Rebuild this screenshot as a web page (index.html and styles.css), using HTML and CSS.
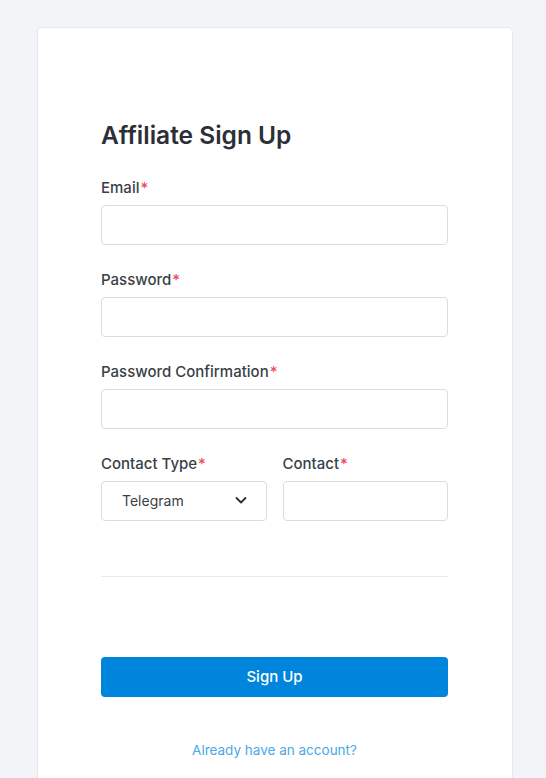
FILE: index.html
```html
<!DOCTYPE html>
<html lang="en">
<head>
    <meta charset="UTF-8">
    <meta name="viewport" content="width=device-width, initial-scale=1.0">
    <title>Affiliate Sign Up</title>
    <link rel="stylesheet" href="styles.css">
</head>
<body>
    <div class="card">
        <h1>Affiliate Sign Up</h1>

        <!-- Account fields -->
        <div class="field">
            <label for="email">Email<span class="req">*</span></label>
            <input type="email" id="email" class="texts">
        </div>
        <div class="field">
            <label for="password">Password<span class="req">*</span></label>
            <input type="password" id="password" class="texts">
        </div>
        <div class="field">
            <label for="passwordConfirm">Password Confirmation<span class="req">*</span></label>
            <input type="password" id="passwordConfirm" class="texts">
        </div>

        <!-- Contact fields -->
        <div class="field-row">
            <div class="field">
                <label for="contactType">Contact Type<span class="req">*</span></label>
                <div class="select-box">
                    <span>Telegram</span>
                    <svg width="14" height="14" viewBox="0 0 14 14" fill="none">
                        <path d="M2.5 5l4.5 4.5 4.5-4.5" stroke="#2b2f36" stroke-width="1.8" stroke-linecap="round" stroke-linejoin="round"/>
                    </svg>
                </div>
            </div>
            <div class="field">
                <label for="contact">Contact<span class="req">*</span></label>
                <input type="text" id="contact" class="texts">
            </div>
        </div>

        <hr class="divider">

        <button id="signUpBtn" type="button">Sign Up</button>

        <a class="login-link" href="#">Already have an account?</a>
    </div>
</body>
</html>
```

FILE: styles.css
```css
body {
    font-family: 'Inter', 'Noto Sans', sans-serif;
    background-color: #f3f4f8;
    margin: 0;
    color: #3a3f47;
}

.card {
    width: 476px;
    box-sizing: border-box;
    margin: 27px 0 0 37px;
    padding: 91px 64px 40px 63px;
    background-color: #fff;
    border: 1px solid #e6e8ec;
    border-bottom: none;
    border-radius: 5px 5px 0 0;
    min-height: 760px;
}

h1 {
    font-size: 24.5px;
    font-weight: 600;
    line-height: 32px;
    margin: 0 0 27px;
    color: #2b2f36;
}

.field {
    display: flex;
    flex-direction: column;
    margin-bottom: 25px;
}

.field label {
    font-size: 15px;
    font-weight: 500;
    line-height: 20px;
    margin-bottom: 7px;
}

.req {
    color: #ec4d5a;
    margin-left: 1px;
}

.texts {
    width: 100%;
    min-width: 0;
    height: 40px;
    box-sizing: border-box;
    border: 1px solid #d9dde3;
    border-radius: 4px;
    padding: 0 12px;
    font: inherit;
}

.field-row {
    display: flex;
    gap: 16px;
}

.field-row .field {
    flex: 1;
    min-width: 0;
    margin-bottom: 0;
}

.select-box {
    height: 40px;
    box-sizing: border-box;
    border: 1px solid #d9dde3;
    border-radius: 4px;
    padding: 0 18px 2px 20px;
    display: flex;
    align-items: center;
    justify-content: space-between;
    font-size: 14px;
    color: #3a3f47;
}

.divider {
    border: none;
    border-top: 1px solid #e8e9ec;
    margin: 55px 0 80px;
}

#signUpBtn {
    display: block;
    width: 100%;
    height: 40px;
    padding: 0 0 2px;
    background-color: #0085dd;
    color: white;
    border: none;
    border-radius: 4px;
    font: inherit;
    font-size: 15px;
    font-weight: 500;
    cursor: pointer;
}

.login-link {
    display: block;
    text-align: center;
    margin-top: 43px;
    font-size: 13.5px;
    line-height: 20px;
    color: #4aa8e8;
    text-decoration: none;
}
```
